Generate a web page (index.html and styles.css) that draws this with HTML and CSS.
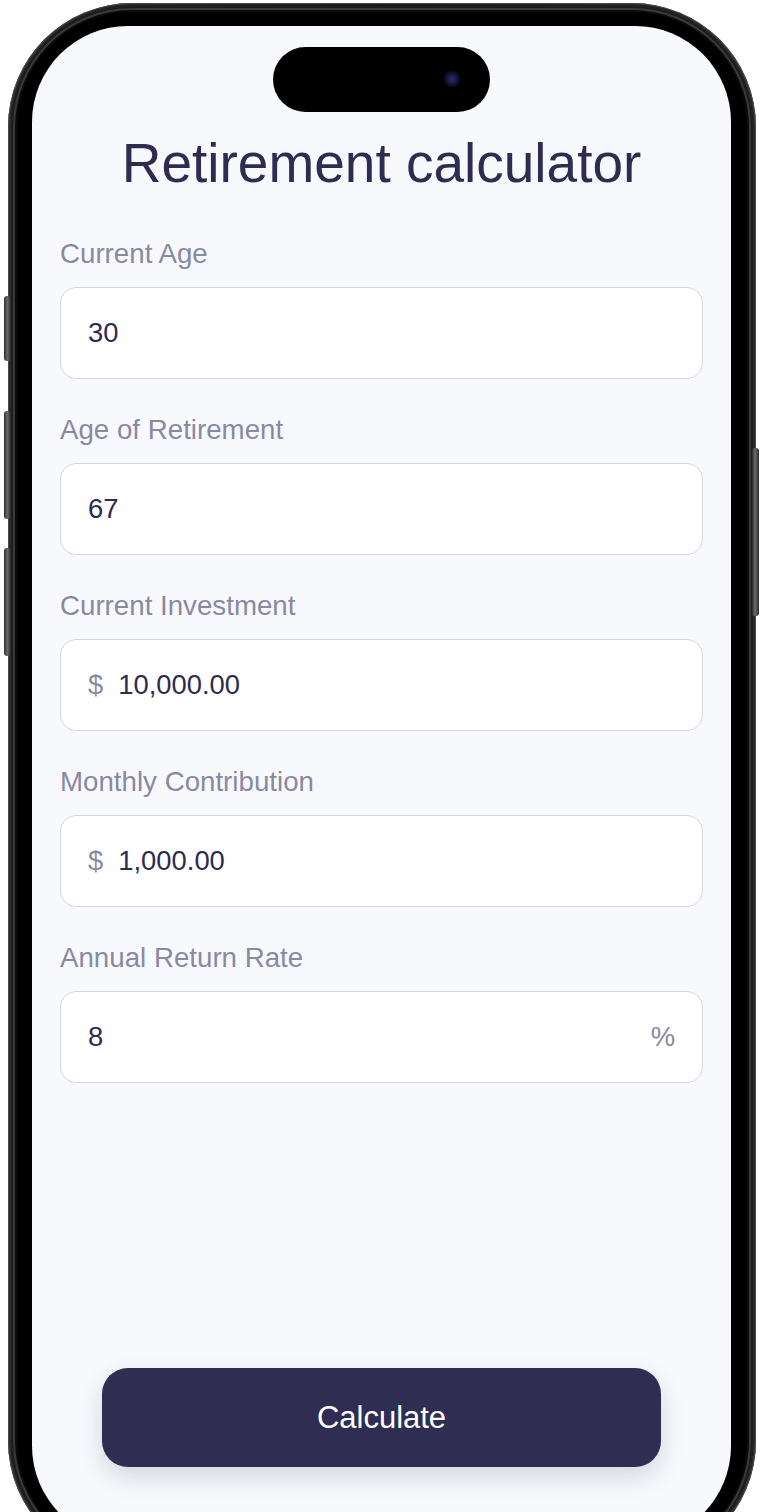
FILE: index.html
```html
<!DOCTYPE html>
<html lang="en">
<head>
  <meta charset="UTF-8">
  <meta name="viewport" content="width=device-width, initial-scale=1.0">
  <title>Retirement calculator</title>
  <link rel="stylesheet" href="styles.css">
</head>
<body>
  <!-- Phone frame -->
  <div class="phone">
    <span class="side-btn left action"></span>
    <span class="side-btn left vol-up"></span>
    <span class="side-btn left vol-down"></span>
    <span class="side-btn right power"></span>

    <div class="bezel">
      <div class="screen">
        <div class="island"><span class="camera"></span></div>

        <h1 class="title">Retirement calculator</h1>

        <form class="form">
          <div class="field">
            <label class="label">Current Age</label>
            <div class="input">
              <span class="value">30</span>
            </div>
          </div>

          <div class="field">
            <label class="label">Age of Retirement</label>
            <div class="input">
              <span class="value">67</span>
            </div>
          </div>

          <div class="field">
            <label class="label">Current Investment</label>
            <div class="input">
              <span class="affix">$</span>
              <span class="value">10,000.00</span>
            </div>
          </div>

          <div class="field">
            <label class="label">Monthly Contribution</label>
            <div class="input">
              <span class="affix">$</span>
              <span class="value">1,000.00</span>
            </div>
          </div>

          <div class="field">
            <label class="label">Annual Return Rate</label>
            <div class="input">
              <span class="value grow">8</span>
              <span class="affix">%</span>
            </div>
          </div>
        </form>

        <button class="button" type="button">Calculate</button>
      </div>
    </div>
  </div>
</body>
</html>
```

FILE: styles.css
```css
* {
  margin: 0;
  padding: 0;
  box-sizing: border-box;
  font-family: 'Liberation Sans', Arial, sans-serif;
}

body {
  background: #ffffff;
  overflow: hidden;
  height: 1512px;
}

/* Phone frame */
.phone {
  position: relative;
  width: 748px;
  margin: 3px 0 0 8px;
  padding: 3px;
  border-radius: 124px;
  background: linear-gradient(90deg, #2b2b2b, #1a1a1a 50%, #2b2b2b);
  box-shadow: inset 0 0 0 1px #4a4a4a;
}

.bezel {
  padding: 20px 22px 20px 21px;
  border-radius: 121px;
  background: #000;
  box-shadow: inset 0 0 0 2px #1d1d1d, inset 0 0 0 4px #3a3a3a, inset 0 0 0 6px #0a0a0a;
}

.side-btn {
  position: absolute;
  width: 7px;
  border-radius: 3px;
  background: linear-gradient(90deg, #2a2a2a, #6a6a6a 45%, #2a2a2a);
}

.side-btn.left { left: -4px; }
.side-btn.right { right: -3px; }
.action { top: 293px; height: 65px; }
.vol-up { top: 408px; height: 108px; }
.vol-down { top: 545px; height: 108px; }
.power { top: 445px; height: 168px; }

/* Screen */
.screen {
  position: relative;
  height: 1516px;
  display: flex;
  flex-direction: column;
  padding: 107px 28px 75px;
  border-radius: 96px;
  background: #f8f9fd;
  overflow: hidden;
}

.island {
  position: absolute;
  top: 21px;
  left: 241px;
  width: 217px;
  height: 65px;
  border-radius: 33px;
  background: #000;
}

.camera {
  position: absolute;
  top: 24px;
  left: 171px;
  width: 16px;
  height: 16px;
  border-radius: 50%;
  background: radial-gradient(circle, #2a2f6a 0%, #13163a 45%, #05050c 80%);
}

.title {
  font-size: 55px;
  line-height: 61px;
  font-weight: normal;
  text-align: center;
  color: #2f2c52;
  margin-bottom: 44px;
}

/* Form */
.form {
  display: flex;
  flex-direction: column;
  gap: 35px;
}

.field {
  display: flex;
  flex-direction: column;
  gap: 17px;
}

.label {
  font-size: 27.7px;
  line-height: 32px;
  color: #8a89a2;
}

.input {
  display: flex;
  align-items: center;
  gap: 15px;
  height: 92px;
  padding: 0 27px;
  background: #ffffff;
  border: 1.5px solid #d6d6dd;
  border-radius: 16px;
  font-size: 27.4px;
}

.value {
  color: #2e2b50;
}

.value.grow {
  flex: 1;
}

.affix {
  color: #8a89a2;
}

/* Calculate button */
.button {
  align-self: center;
  margin-top: auto;
  width: 559px;
  height: 99px;
  border: none;
  border-radius: 26px;
  background: #302d52;
  color: #ffffff;
  font-size: 31px;
  box-shadow: 0 10px 24px rgba(40, 40, 70, 0.16);
  cursor: pointer;
}
```
